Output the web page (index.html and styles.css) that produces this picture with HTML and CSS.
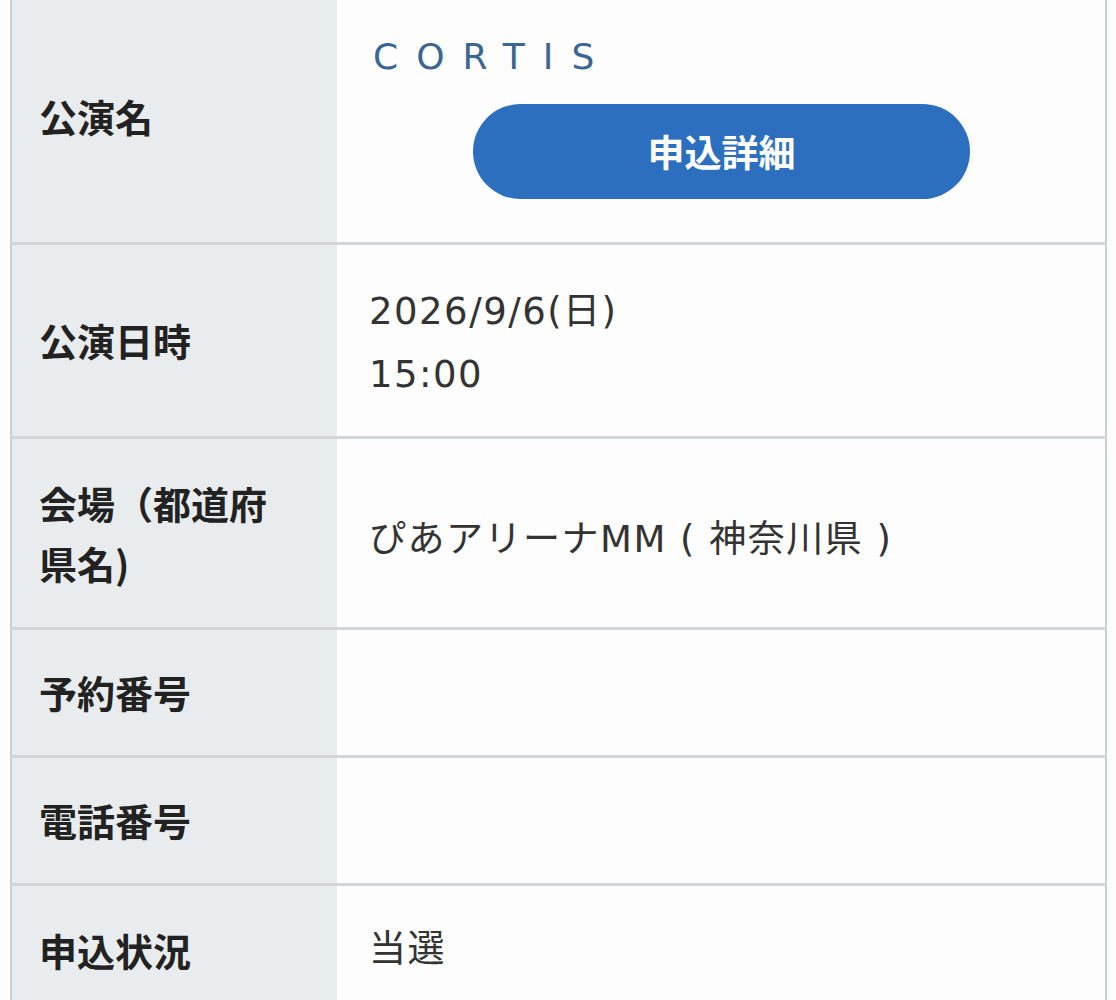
FILE: index.html
```html
<!DOCTYPE html>
<html lang="ja">
<head>
    <meta charset="UTF-8">
    <meta name="viewport" content="width=device-width, initial-scale=1.0">
    <title>申込内容</title>
    <link rel="stylesheet" href="styles.css">
</head>
<body>
    <div class="detail">
        <table class="detail-table">
            <tr class="row-title">
                <th>公演名</th>
                <td>
                    <p class="event-name">CORTIS</p>
                    <div class="btn-wrap">
                        <a href="#" class="btn-detail">申込詳細</a>
                    </div>
                </td>
            </tr>
            <tr class="row-date">
                <th>公演日時</th>
                <td>2026/9/6(日)<br>15:00</td>
            </tr>
            <tr class="row-venue">
                <th>会場（都道府<br>県名)</th>
                <td>ぴあアリーナMM ( 神奈川県 )</td>
            </tr>
            <tr class="row-short">
                <th>予約番号</th>
                <td></td>
            </tr>
            <tr class="row-short">
                <th>電話番号</th>
                <td></td>
            </tr>
            <tr class="row-status">
                <th>申込状況</th>
                <td>当選</td>
            </tr>
        </table>
    </div>
</body>
</html>
```

FILE: styles.css
```css
* {
    margin: 0;
    padding: 0;
    box-sizing: border-box;
}

body {
    font-family: "Noto Sans CJK JP", "Noto Sans", sans-serif;
    background: #fdfdfd;
    color: #2b2b2b;
    overflow: hidden;
}

.detail {
    margin-left: 10px;
    width: 1097px;
}

.detail-table {
    width: 100%;
    border-collapse: collapse;
    border-left: 2px solid #cbced2;
    border-right: 2px solid #cbced2;
}

.detail-table th,
.detail-table td {
    border-bottom: 3px solid #d3d6d9;
    vertical-align: middle;
    text-align: left;
}

.detail-table th {
    width: 326px;
    background: #e9ecee;
    padding: 0 16px 0 27px;
    font-size: 38px;
    font-weight: 700;
    line-height: 60px;
    color: #222;
}

/* values: latin glyphs set wider than the CJK face's own */
.detail-table td {
    background: #fdfdfd;
    padding: 0 30px 0 32px;
    font-family: "DejaVu Sans", "Noto Sans CJK JP", sans-serif;
    font-size: 37px;
    font-weight: 400;
    line-height: 63px;
    letter-spacing: 1.5px;
    color: #333;
}

/* row heights */
.row-title { height: 243px; }
.row-date { height: 194px; }
.row-venue { height: 191px; }
.row-short { height: 128px; }
.row-status { height: 130px; }

.row-title th {
    padding-bottom: 10px;
}

.row-date td {
    padding-top: 5px;
}

.row-venue td {
    padding-top: 14px;
}

.row-status th,
.row-status td {
    border-bottom: none;
}

.event-name {
    color: #3b6592;
    font-size: 36px;
    letter-spacing: 0.5em;
    line-height: 50px;
    margin: -10px 0 0 4px;
}

.btn-wrap {
    padding: 22px 0 0 104px;
}

.btn-detail {
    display: block;
    width: 497px;
    height: 95px;
    border-radius: 48px;
    background: #2d6fbf;
    color: #fff;
    font-family: "Noto Sans CJK JP", sans-serif;
    font-size: 37px;
    font-weight: 700;
    line-height: 95px;
    letter-spacing: 0;
    text-align: center;
    text-decoration: none;
}
```
